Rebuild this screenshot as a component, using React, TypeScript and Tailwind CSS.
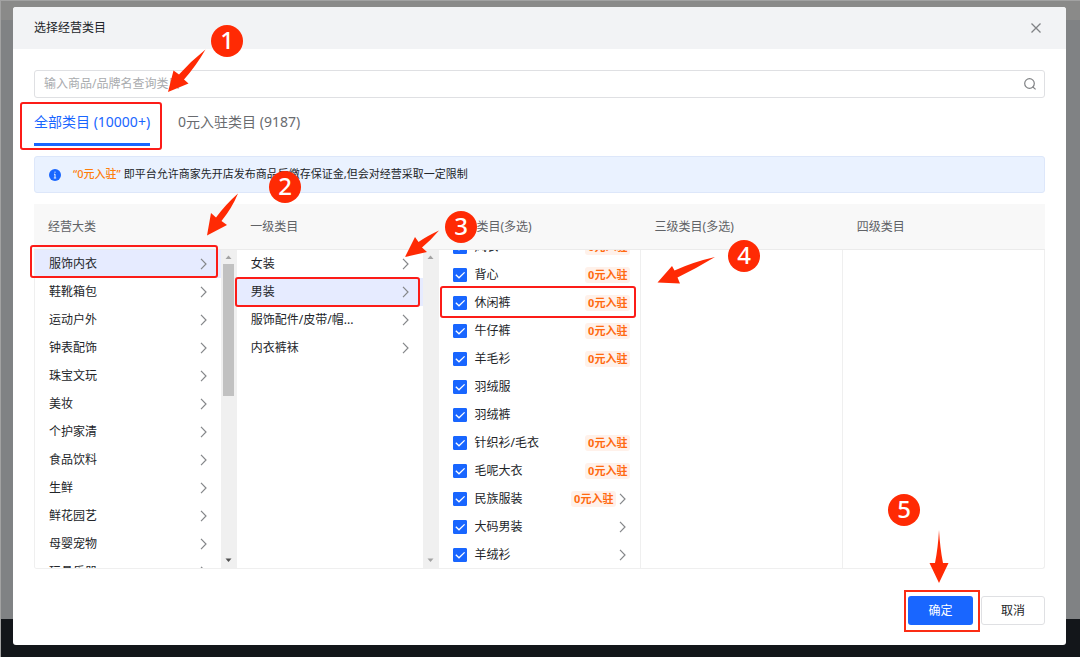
import React, { useState } from "react";

const bigCategories = [
  "服饰内衣", "鞋靴箱包", "运动户外", "钟表配饰", "珠宝文玩", "美妆",
  "个护家清", "食品饮料", "生鲜", "鲜花园艺", "母婴宠物", "玩具乐器",
];
const firstLevel = ["女装", "男装", "服饰配件/皮带/帽...", "内衣裤袜"];
const secondLevel = [
  { name: "风衣", free: true },
  { name: "背心", free: true },
  { name: "休闲裤", free: true },
  { name: "牛仔裤", free: true },
  { name: "羊毛衫", free: true },
  { name: "羽绒服" },
  { name: "羽绒裤" },
  { name: "针织衫/毛衣", free: true },
  { name: "毛呢大衣", free: true },
  { name: "民族服装", free: true, more: true },
  { name: "大码男装", more: true },
  { name: "羊绒衫", more: true },
];

function Chevron() {
  return (
    <svg viewBox="0 0 14 14" className="h-[14px] w-[14px] shrink-0" fill="none" stroke="#85878a" strokeWidth="1.2" aria-hidden="true">
      <path d="M4 1.8 L9 7 L4 12.2" />
    </svg>
  );
}

function NavRow({ label, active, onClick }: { label: string; active: boolean; onClick: () => void }) {
  return (
    <button
      type="button"
      onClick={onClick}
      className={`flex h-7 w-full shrink-0 items-center justify-between pr-[10px] pl-[14px] text-left ${active ? "bg-[#e6ebff]" : "bg-white"}`}
    >
      <span>{label}</span>
      <Chevron />
    </button>
  );
}

function ScrollTrack({ thumb }: { thumb?: boolean }) {
  return (
    <div className="flex w-4 shrink-0 flex-col items-center bg-[#f0f0f0]" aria-hidden="true">
      <svg viewBox="0 0 16 14" className="h-[14px] w-4 shrink-0"><path d="M4.500 9 L7.500 5.500 L10.500 9 Z" fill="#a3a3a3" /></svg>
      <div className="min-h-0 w-[11px] flex-1">
        {thumb && <div className="h-[132px] bg-[#c1c1c1]" />}
      </div>
      <svg viewBox="0 0 16 14" className="h-[14px] w-4 shrink-0"><path d="M4.500 4.500 L7.500 8 L10.500 4.500 Z" fill={thumb ? "#505050" : "#a3a3a3"} /></svg>
    </div>
  );
}

function CheckRow({ name, free, more }: { name: string; free?: boolean; more?: boolean }) {
  return (
    <div className="flex h-7 shrink-0 items-center pr-[10px] pl-[14px]">
      <label className="flex flex-1 items-center gap-2">
        <span className="relative h-[14px] w-[14px]">
          <input type="checkbox" defaultChecked className="peer block h-[14px] w-[14px] appearance-none rounded-[1px] border border-[#c9cbd0] bg-white checked:border-[#1966ff] checked:bg-[#1966ff]" />
          <svg viewBox="0 0 14 14" className="pointer-events-none absolute inset-0 hidden h-[14px] w-[14px] peer-checked:block" fill="none" stroke="#fff" strokeWidth="1.3">
            <path d="M2.8 6.8 L6 9.8 L11.6 4.4" />
          </svg>
        </span>
        <span>{name}</span>
      </label>
      {free && <span className="rounded-[3px] bg-[#fff1ea] px-[3px] text-[11px] leading-4 font-bold text-[#ff6a10]">0元入驻</span>}
      {more && <Chevron />}
    </div>
  );
}

function Step({ n, className }: { n: number; className: string }) {
  return (
    <span className={`absolute flex h-8 w-8 items-start justify-center rounded-full bg-[#ff2a04] text-2xl leading-[30px] font-medium text-white ${className}`}>
      {n}
    </span>
  );
}

export default function App() {
  const [tab, setTab] = useState(0);
  const [big, setBig] = useState(0);
  const [first, setFirst] = useState(1);
  const tabs = ["全部类目 (10000+)", "0元入驻类目 (9187)"];

  return (
    <div className="grid min-h-screen font-['Noto_Sans','Noto_Sans_CJK_SC',sans-serif] text-xs text-[#222529]">
      <div className="col-start-1 row-start-1 flex flex-col border-t border-l border-[#a2a2a2] bg-[#808284]" aria-hidden="true">
        <div className="h-[19px] bg-[#8a8a89]" />
        <div className="flex-1" />
        <div className="h-[38px] bg-[#13161a]" />
      </div>

      <div role="dialog" aria-label="选择经营类目" className="relative col-start-1 row-start-1 mt-[7px] mr-[14px] mb-3 ml-[13px] self-start rounded-[3px] bg-white">
        <header className="flex h-[42px] items-center justify-between rounded-t-[3px] bg-[#f2f3f5] px-[21px]">
          <h1>选择经营类目</h1>
          <button type="button" aria-label="关闭" className="flex h-[18px] w-[18px] items-center justify-center">
            <svg viewBox="0 0 12 12" className="h-3 w-3" fill="none" stroke="#808285" strokeWidth="1.3"><path d="M1.5 1.5 L10.5 10.5 M10.5 1.5 L1.5 10.5" /></svg>
          </button>
        </header>

        <main className="px-[21px] pt-[21px] pb-5">
          <div className="flex h-7 items-center rounded-[3px] border border-[#dfe0e3] pr-2 pl-[9px]">
            <input type="text" aria-label="搜索类目" placeholder="输入商品/品牌名查询类目" className="min-w-0 flex-1 bg-transparent outline-none placeholder:text-[#a9abae]" />
            <button type="button" aria-label="搜索">
              <svg viewBox="0 0 12 12" className="h-3 w-3" fill="none" stroke="#808285" strokeWidth="1.2"><circle cx="5.5" cy="5.5" r="4.8" /><path d="M8.6 8.8 L11.6 11.4" /></svg>
            </button>
          </div>

          <div role="tablist" className="flex gap-7">
            {tabs.map((t, i) => (
              <button
                key={t}
                type="button"
                role="tab"
                aria-selected={tab === i}
                onClick={() => setTab(i)}
                className={`border-b-[3px] pt-[14px] pb-[11px] text-sm leading-5 ${tab === i ? "border-[#1966ff] text-[#1966ff]" : "border-transparent text-[#696b6f]"}`}
              >
                {t}
              </button>
            ))}
          </div>

          <div className="mt-[10px] flex h-[37px] items-center rounded-[3px] border border-[#dde7fa] bg-[#eaf2ff] px-[14px] text-[11px]">
            <svg viewBox="0 0 12 12" className="mr-3 h-3 w-3" aria-hidden="true">
              <circle cx="6" cy="6" r="6" fill="#1966ff" />
              <path d="M6 2.6 V3.8 M6 5 V8.8 M4.8 9 H7.2 M5 5.2 H6" stroke="#fff" strokeWidth="0.9" fill="none" />
            </svg>
            <p><span className="mr-[3px] font-medium text-[#ff7d0a]">“0元入驻”</span>即平台允许商家先开店发布商品后缴存保证金,但会对经营采取一定限制</p>
          </div>

          <div className="mt-[11px]">
            <div className="grid h-[46px] grid-cols-5 items-center border-b border-[#ebebeb] bg-[#f8f8f8] text-[#606266]">
              {["经营大类", "一级类目", "二级类目(多选)", "三级类目(多选)", "四级类目"].map((h) => (
                <span key={h} className="pl-[14px]">{h}</span>
              ))}
            </div>
            <div className="grid h-[319px] grid-cols-5 overflow-hidden rounded-b-[3px] border border-t-0 border-[#efefef]">
              <div className="flex min-h-0">
                <div className="flex flex-1 flex-col overflow-hidden">
                  {bigCategories.map((c, i) => <NavRow key={c} label={c} active={i === big} onClick={() => setBig(i)} />)}
                </div>
                <ScrollTrack thumb />
              </div>
              <div className="flex min-h-0">
                <div className="flex flex-1 flex-col overflow-hidden">
                  {firstLevel.map((c, i) => <NavRow key={c} label={c} active={i === first} onClick={() => setFirst(i)} />)}
                </div>
                <ScrollTrack />
              </div>
              <div className="-mb-px flex min-h-0 flex-col justify-end overflow-hidden">
                {secondLevel.map((c) => <CheckRow key={c.name} {...c} />)}
              </div>
              <div className="border-l border-[#efefef]" />
              <div className="border-l border-[#efefef]" />
            </div>
          </div>

          <footer className="mt-[27px] flex justify-end gap-2">
            <div className="relative">
              <button type="button" className="h-[29px] w-[65px] rounded-[3px] bg-[#1966ff] text-white">确定</button>
              <span className="pointer-events-none absolute -top-[6px] -right-[7px] -bottom-[7px] -left-1 border-2 border-[#fb2c14]" />
            </div>
            <button type="button" className="h-[29px] w-16 rounded-[3px] border border-[#dfe0e3] bg-white">取消</button>
          </footer>
        </main>

        <div className="pointer-events-none absolute inset-0">
          <span className="absolute top-[95px] left-[7px] h-12 w-[142px] rounded-[3px] border-2 border-[#fc1c18]" />
          <span className="absolute top-[238px] left-[17px] h-[33px] w-[188px] rounded-[3px] border-2 border-[#fc1c18]" />
          <span className="absolute top-[270px] left-[222px] h-[30px] w-[185px] rounded-[3px] border-2 border-[#fc1c18]" />
          <span className="absolute top-[279px] left-[427px] h-8 w-[196px] rounded-[3px] border-2 border-[#fc1c18]" />
          <svg className="absolute -top-[7px] -left-[13px] h-[657px] w-[1080px]" viewBox="0 0 1080 657" fill="#ff2a04" aria-hidden="true">
            <path d="M168 92 L173.500 70.500 L179 74.500 Q191 61 205.500 49.500 Q196 66 184 79.500 L188.500 83.500 Z" />
            <path d="M207 235.500 L211 213 L216 217.500 Q226 204 238 193.500 Q232 208 221.500 221 L227 225 Z" />
            <path d="M405 257 L415 237 L418.500 242 Q427 236 439 230.500 Q431 240 422 247.500 L427 252 Z" />
            <path d="M657.500 282.500 L672 266 L674.500 270.500 Q693 262 715 257 Q697 268 677.500 277.500 L680 283.500 Z" />
            <path d="M939 583 L929.500 563 L935 563 Q938 548 939 530 Q940 548 943 563 L948.500 563 Z" />
          </svg>
          <Step n={1} className="top-[18px] left-[198px]" />
          <Step n={2} className="top-[164px] left-[256px]" />
          <Step n={3} className="top-[204px] left-[432px]" />
          <Step n={4} className="top-[233px] left-[715px]" />
          <Step n={5} className="top-[487px] left-[875px]" />
        </div>
      </div>
    </div>
  );
}
